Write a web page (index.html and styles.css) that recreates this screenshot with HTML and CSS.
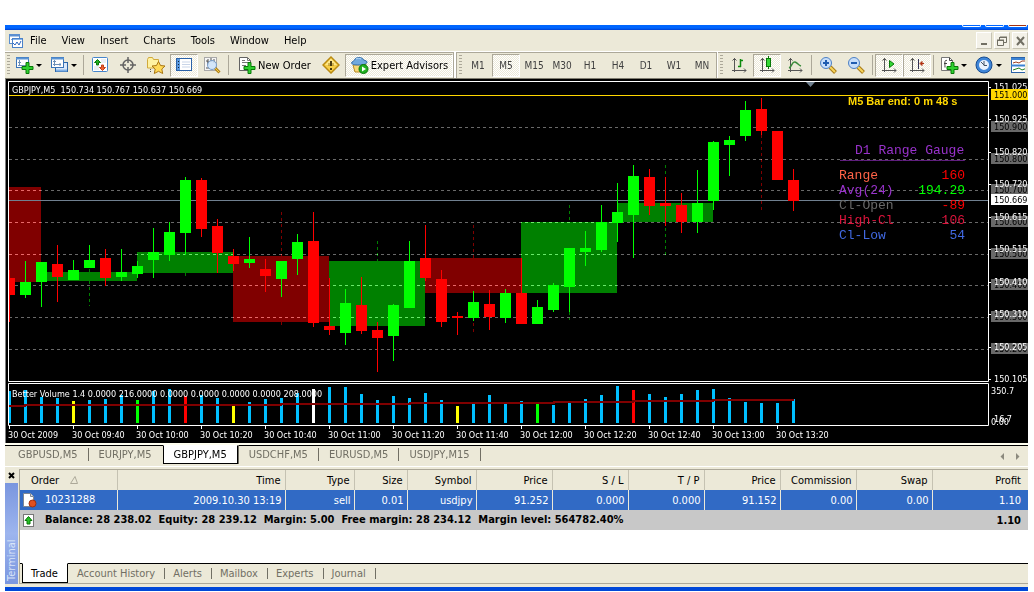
FILE: index.html
```html
<!DOCTYPE html>
<html lang="en">
<head>
<meta charset="utf-8">
<title>GBPJPY,M5</title>
<link rel="stylesheet" href="styles.css">
</head>
<body>
<div class="window">
  <div class="titlebar"><span class="cap"></span><span class="cap"></span><span class="cap cap-close"></span></div>

  <nav class="menubar">
    <svg class="menu-icon" width="16" height="16" viewBox="0 0 16 16"><rect x="1.500" y="1.500" width="10" height="9" fill="#fff" stroke="#5b8fd0"/><path d="M2 2.500h9" stroke="#5b8fd0" stroke-width="2"/><path d="M3 7l1-1 1 2 2-3 1 2" fill="none" stroke="#7aa5dc"/><rect x="4.500" y="5.500" width="10" height="9" fill="#fff" stroke="#4b82c8"/><path d="M5 6.500h9" stroke="#86b4ea" stroke-width="1"/><path d="M5 10l2 2 2-3 2 3 2-4" fill="none" stroke="#2b66c0"/></svg>
    <button class="menu">File</button><button class="menu">View</button><button class="menu">Insert</button><button class="menu">Charts</button><button class="menu">Tools</button><button class="menu">Window</button><button class="menu">Help</button>
    <span class="spring"></span>
    <button class="mdi" aria-label="Minimize"><svg width="14" height="14"><path d="M4 10h6" stroke="#716f64" stroke-width="2"/></svg></button>
    <button class="mdi" aria-label="Restore"><svg width="14" height="14"><path d="M5 3.500h7M4.500 3v3M11.500 3v5.500H9M2 6.500h7M2.500 6v5.500h6V6" fill="none" stroke="#716f64"/><path d="M5 3h7M2 6h7" stroke="#716f64"/></svg></button>
    <button class="mdi" aria-label="Close"><svg width="14" height="14"><path d="M4 3l7 8M11 3l-7 8" stroke="#716f64" stroke-width="2"/></svg></button>
  </nav>

  <div class="toolbar">
    <span class="grip"></span>
    <button class="tool wide" aria-label="New chart"><svg width="19" height="18"><rect x="1.500" y="1.500" width="12" height="10" fill="#fff" stroke="#3a74b8"/><path d="M1 2.500h13" stroke="#5b94d4" stroke-width="2"/><path d="M4.500 4v6M3 6.500h3M3 9.500h8" stroke="#6d90b8"/><path d="M11 6.500h3v4h4v3h-4v4h-3v-4H7v-3h4z" fill="#2fd02f" stroke="#087808"/></svg><i class="arrow"></i></button>
    <button class="tool wide" aria-label="Profiles"><svg width="19" height="18"><rect x="5.500" y="6.500" width="12" height="9" fill="#dbe9fa" stroke="#2c66a8"/><path d="M6 14.500h11" stroke="#7fb0e6" stroke-width="2"/><rect x="1.500" y="1.500" width="12" height="10" fill="#fff" stroke="#3a74b8"/><path d="M1 2.500h13" stroke="#5b94d4" stroke-width="2"/><path d="M4.500 4v6M3 5.500h3M3 8.500h8M10 7v3" stroke="#6d90b8"/></svg><i class="arrow"></i></button>
    <span class="sep"></span>
    <button class="tool" aria-label="Market watch"><svg width="18" height="18"><rect x="1.500" y="1.500" width="15" height="14" rx="1" fill="#fff" stroke="#4585cc"/><path d="M10 4h5M10 6h5M3 11h5M3 13h5" stroke="#d5dfe8"/><path d="M6.500 3.500l3 3H7.500V9h-2V6.500h-2z" fill="#20b020" stroke="#087808"/><path d="M11.500 14.500l-3-3h2V9h2v2.500h2z" fill="#f06030" stroke="#c04018"/></svg></button>
    <button class="tool" aria-label="Crosshair"><svg width="18" height="18"><circle cx="9" cy="9" r="5" fill="none" stroke="#636363" stroke-width="1.500"/><path d="M9 1v6M9 11v6M1 9h6M11 9h6" stroke="#636363" stroke-width="1.500"/></svg></button>
    <button class="tool" aria-label="Navigator"><svg width="20" height="18"><path d="M1.500 12V3.500l1-2h4l1 2h5V12z" fill="#fff2a2" stroke="#d0a93c"/><path d="M4.500 13v4" stroke="#555" stroke-dasharray="1 1"/><path d="M12.500 5.500l2 4 4.500.5-3.200 3 .9 4.500-4.200-2.200-4.200 2.200.9-4.500L6 10l4.500-.5z" fill="#ffda58" stroke="#a97612"/></svg></button>
    <button class="tool pressed" aria-label="Terminal"><svg width="18" height="18"><rect x="1.500" y="2.500" width="15" height="12" fill="#fff" stroke="#2b62a8"/><path d="M3.500 3v11" stroke="#5c9ae0" stroke-width="3"/><path d="M3 5.500h1M3 8.500h1M3 11.500h1" stroke="#123"/><path d="M7 6h8M7 8.500h8M7 11h8" stroke="#c9d5e8"/></svg></button>
    <button class="tool" aria-label="Strategy tester"><svg width="18" height="18"><rect x="1.500" y="1.500" width="12" height="13" fill="#f6f6f6" stroke="#a9a9a9"/><path d="M3 5h2v4M5 3v5M8 2v4M11 3v4M3 12h3" stroke="#555" fill="none"/><path d="M12 12l4.500 4.500" stroke="#b28218" stroke-width="3"/><path d="M12 12l4 4" stroke="#f3cc4c"/><circle cx="9" cy="9" r="4.500" fill="#cde3fa" fill-opacity=".85" stroke="#789cc8"/></svg></button>
    <span class="sep"></span>
    <button class="tool label-tool"><svg width="19" height="18"><path d="M2.500 1.500h8l3 3v10h-11z" fill="#fff" stroke="#636363"/><path d="M10.500 1.500v3h3M5 6.500h6M5 9.500h4M5 4.500h3" fill="none" stroke="#777"/><path d="M11 6.500h3v4h4v3h-4v4h-3v-4H7v-3h4z" fill="#2fd02f" stroke="#087808"/></svg>New Order</button>
    <button class="tool" aria-label="Metaeditor"><svg width="18" height="18"><path d="M9 1l8 8-8 8-8-8z" fill="#f7cf4a" stroke="#b98a12" stroke-width="1.500"/><path d="M9 2.500l6 6.500H3z" fill="#ffe88c"/><path d="M9 5v5M9 12v2" stroke="#4b3c10" stroke-width="2"/><path d="M7 7v3M11 7v3" stroke="#a07c16"/></svg></button>
    <button class="tool pressed label-tool experts"><svg width="19" height="18"><path d="M3 9l2 7h9l2-8z" fill="#f9d878" stroke="#ba8c22"/><path d="M1.500 7C2 5 5 5 5 3c1-2 7-2 8 0 0 2 4 1 4 3s-3 3-8 3-7-.5-7.500-2z" fill="#71a9de" stroke="#336ba5"/><path d="M6 3c1-1 4-1 5 0" stroke="#b8dafa" fill="none"/><circle cx="13.500" cy="13" r="4.500" fill="#22b022" stroke="#087808"/><path d="M12 10.500l4 2.500-4 2.500z" fill="#fff"/></svg>Expert Advisors</button>
    <span class="band-end"></span>
    <span class="grip"></span>
    <button class="tool period">M1</button><button class="tool period pressed">M5</button><button class="tool period">M15</button><button class="tool period">M30</button><button class="tool period">H1</button><button class="tool period">H4</button><button class="tool period">D1</button><button class="tool period">W1</button><button class="tool period">MN</button>
    <span class="band-end single"></span>
    <span class="grip"></span>
    <button class="tool" aria-label="Bar chart"><svg width="18" height="18"><path d="M4.500 2v14M2 14.500h14M2.500 4.500l2-2 2 2M14 12.500l2 2-2 2" fill="none" stroke="#555"/><path d="M10.500 3v8M10 4.500h3M8 10.500h3" stroke="#0c8a0c" stroke-width="1.500"/></svg></button>
    <button class="tool pressed" aria-label="Candlesticks"><svg width="18" height="18"><path d="M4.500 2v14M2 14.500h14M2.500 4.500l2-2 2 2M14 12.500l2 2-2 2" fill="none" stroke="#555"/><path d="M10.500 0v13" stroke="#087808"/><rect x="8.500" y="2.500" width="4" height="8" fill="#35d835" stroke="#087808"/></svg></button>
    <button class="tool" aria-label="Line chart"><svg width="18" height="18"><path d="M4.500 2v14M2 14.500h14M2.500 4.500l2-2 2 2M14 12.500l2 2-2 2" fill="none" stroke="#555"/><path d="M3 12c3-1 3-7 6-6s3 3 6 4" fill="none" stroke="#3c8c3c" stroke-width="1.500"/></svg></button>
    <span class="sep"></span>
    <button class="tool" aria-label="Zoom in"><svg width="18" height="18"><path d="M11 11l5.500 5.500" stroke="#a97c18" stroke-width="4"/><path d="M11 11l5 5" stroke="#f6d45c" stroke-width="2"/><circle cx="7" cy="7" r="5.500" fill="#c7defa" stroke="#4c80c4"/><path d="M4 7h6M7 4v6" stroke="#1f5cb0" stroke-width="2"/></svg></button>
    <button class="tool" aria-label="Zoom out"><svg width="18" height="18"><path d="M11 11l5.500 5.500" stroke="#a97c18" stroke-width="4"/><path d="M11 11l5 5" stroke="#f6d45c" stroke-width="2"/><circle cx="7" cy="7" r="5.500" fill="#c7defa" stroke="#4c80c4"/><path d="M4 7h6" stroke="#1f5cb0" stroke-width="2"/></svg></button>
    <span class="sep"></span>
    <button class="tool pressed" aria-label="Auto scroll"><svg width="18" height="18"><path d="M4.500 2v14M2 14.500h14M2.500 4.500l2-2 2 2M14 12.500l2 2-2 2" fill="none" stroke="#555"/><path d="M9.500 4.500v7L14 8z" fill="#35d835" stroke="#087808"/></svg></button>
    <button class="tool pressed" aria-label="Chart shift"><svg width="18" height="18"><path d="M4.500 2v14M2 14.500h14M2.500 4.500l2-2 2 2M14 12.500l2 2-2 2" fill="none" stroke="#555"/><path d="M10.500 3v10" stroke="#335"/><path d="M16 7.500h-3M14 5.500l-2 2 2 2z" fill="#b03010" stroke="#b03010"/></svg></button>
    <span class="sep"></span>
    <button class="tool wide" aria-label="Indicators"><svg width="19" height="18"><path d="M1.500 1.500h8l3 3v10h-11z" fill="#fff" stroke="#777"/><path d="M9.500 1.500v3h3M7 4.500c-3-1-2 3-2 7M4 7.500h3" fill="none" stroke="#444"/><path d="M11 6.500h3v4h4v3h-4v4h-3v-4H7v-3h4z" fill="#2fd02f" stroke="#087808"/></svg><i class="arrow"></i></button>
    <button class="tool wide" aria-label="Periodicity"><svg width="19" height="18"><circle cx="9" cy="9" r="6.500" fill="#e9f3fd" stroke="#3f86d8" stroke-width="3"/><circle cx="9" cy="9" r="8" fill="none" stroke="#184c90"/><path d="M9 5v4.500h3M6 6l3 3" fill="none" stroke="#456"/></svg><i class="arrow"></i></button>
    <button class="tool last" aria-label="Templates"><svg width="15" height="18"><rect x="1.500" y="1.500" width="18" height="15" fill="#fff" stroke="#2b62a8"/><path d="M1 3h18M1 9.500h18" stroke="#3c83d4" stroke-width="2"/><path d="M3 7l3-1 3 1 3-2h5" fill="none" stroke="#a04020"/><path d="M3 14l3-1 3-1 3 2 5-2" fill="none" stroke="#208020"/></svg></button>
  </div>

  <svg class="chart" id="chart" viewBox="5 79 1023 364" role="img" aria-label="GBPJPY five minute chart">
    <rect x="5" y="79" width="1023" height="364" fill="#000"/>
    <rect x="5" y="79" width="1" height="364" fill="#808080"/>
    <g id="zones"></g>
    <g id="grid"></g>
    <g id="candles"></g>
    <path d="M9 95.500H988" stroke="#ffd700"/>
    <path d="M806 82h9l-4.500 5z" fill="#708090"/>
    <g id="volume"></g>
    <path d="M9 406H25V405H281V404H410V403H554V402H633V401H713V400H794" fill="none" stroke="#800000" stroke-width="2"/>
    <path d="M8.500 381.500V81.500H988.500V381.500zM8.500 383.500H988.500V425.500H8.500z" fill="none" stroke="#fff"/>
    <g id="axes"></g>
    <text class="chart-text" x="12" y="93">GBPJPY,M5&#160; 150.734 150.767 150.637 150.669</text>
    <text class="chart-text" x="12" y="397">Better Volume 1.4 0.0000 216.0000 0.0000 0.0000 0.0000 0.0000 208.0000</text>
    <text class="bar-end" x="848" y="105">M5 Bar end: 0 m 48 s</text>
    <g class="gauge">
      <text x="855" y="154" fill="#9932cc">D1 Range Gauge</text>
      <text x="840" y="159" fill="#9932cc">________________</text>
      <text x="839" y="179" fill="#ff6347">Range</text><text class="end" x="965" y="179" fill="#ff0000">160</text>
      <text x="839" y="194" fill="#9932cc">Avg(24)</text><text class="end" x="965" y="194" fill="#00ff00">194.29</text>
      <text x="839" y="209" fill="#696969">Cl-Open</text><text class="end" x="965" y="209" fill="#ff0000">-89</text>
      <text x="839" y="224" fill="#dc143c">High-Cl</text><text class="end" x="965" y="224" fill="#dc143c">106</text>
      <text x="839" y="239" fill="#4169e1">Cl-Low</text><text class="end" x="965" y="239" fill="#4169e1">54</text>
    </g>
  </svg>

  <div class="chart-tabs">
    <button class="ctab">GBPUSD,M5</button><button class="ctab plain">EURJPY,M5</button><button class="ctab active">GBPJPY,M5</button><button class="ctab">USDCHF,M5</button><button class="ctab">EURUSD,M5</button><button class="ctab">USDJPY,M15</button>
    <span class="spring"></span>
    <svg width="26" height="10"><path d="M6 2v7L2.500 5.500zM18 2v7l3.500-3.500z" fill="#8c8a7e"/></svg>
  </div>

  <section class="terminal">
    <div class="side">
      <button class="close" aria-label="Close terminal"><svg width="8" height="8"><path d="M1 1l5 5M6 1L1 6" stroke="#000" stroke-width="2"/></svg></button>
      <div class="side-title">Terminal</div>
    </div>
    <div class="panel">
      <table class="orders">
        <colgroup><col class="c-order"><col class="c-time"><col class="c-type"><col class="c-size"><col class="c-type"><col class="c-num"><col class="c-num"><col class="c-num"><col class="c-num"><col class="c-num"><col class="c-num"><col></colgroup>
        <thead><tr><th class="first">Order <svg class="sort" width="9" height="8"><path d="M.500 7.500h7L5 .500z" fill="none" stroke="#aca899"/></svg></th><th>Time</th><th>Type</th><th>Size</th><th>Symbol</th><th>Price</th><th>S / L</th><th>T / P</th><th>Price</th><th>Commission</th><th>Swap</th><th>Profit</th></tr></thead>
        <tbody>
          <tr class="order"><td class="first"><svg width="15" height="16"><path d="M1.500 1.500h7l3 3v10h-10z" fill="#fff" stroke="#7d8794"/><path d="M8.500 1.500v3h3" fill="#ddd" stroke="#7d8794"/><circle cx="10.500" cy="11.500" r="3.500" fill="#e05020" stroke="#a03010"/></svg>10231288</td><td>2009.10.30 13:19</td><td>sell</td><td>0.01</td><td>usdjpy</td><td>91.252</td><td>0.000</td><td>0.000</td><td>91.152</td><td>0.00</td><td>0.00</td><td>1.10</td></tr>
          <tr class="balance"><td class="first" colspan="11"><svg width="15" height="16"><rect x="1.500" y="2.500" width="10" height="12" fill="#fff" stroke="#777"/><path d="M6.500 4.500L10 8.500H8V12H5V8.500H3z" fill="#28c028" stroke="#087808"/></svg>Balance: 28 238.02&#160; Equity: 28 239.12&#160; Margin: 5.00&#160; Free margin: 28 234.12&#160; Margin level: 564782.40%</td><td>1.10</td></tr>
        </tbody>
      </table>
      <div class="blank"></div>
      <div class="term-tabs"><button class="ttab active">Trade</button><button class="ttab">Account History</button><button class="ttab">Alerts</button><button class="ttab">Mailbox</button><button class="ttab">Experts</button><button class="ttab">Journal</button></div>
    </div>
  </section>
  <div class="bottom-edge"></div>
</div>
<script src="chart.js"></script>
</body>
</html>
```
FILE: styles.css
```css
* { box-sizing: border-box; }
body { margin: 0; background: #fff; }
body, button, table { font-family: "DejaVu Sans Condensed", "DejaVu Sans", sans-serif; font-size: 11px; color: #000; }
button { margin: 0; padding: 0; border: 0; background: none; white-space: nowrap; }
svg { flex: none; display: block; }
.window { margin: 25px 6px 0 5px; background: #ece9d8; }
.spring { flex: 1; }

.titlebar { display: flex; justify-content: flex-end; gap: 4px; height: 5px; padding-right: 1px; background: linear-gradient(#0066ff 0 60%, #0040d0); }
.cap { width: 19px; height: 2px; border: 1px solid #fff; border-top: 0; border-radius: 0 0 3px 3px; }
.cap-close { background: #a03010; }

.menubar { display: flex; align-items: center; height: 21px; padding-left: 3px; }
.menu-icon { margin-right: 6px; }
.menu { margin-right: 15px; line-height: 18px; }
.mdi { width: 16px; height: 17px; margin-left: 2px; border: 1px solid; border-color: #fff #c5c2b2 #c5c2b2 #fff; background: #f3f1e8; }

.toolbar { display: flex; align-items: center; height: 28px; border-top: 1px solid #fff; border-bottom: 1px solid #807d70; box-shadow: inset 0 1px #aca899; overflow: hidden; }
.grip { flex: none; width: 3px; height: 20px; margin: 0 2px; background: repeating-linear-gradient(#aca899 0 1px, #ece9d8 1px 3px); }
.toolbar > .grip:first-child { margin-right: 1px; }
.sep { flex: none; width: 1px; height: 20px; margin: 0 2px; background: #aca899; }
.band-end { flex: none; width: 4px; height: 26px; border: 1px solid #aca899; border-width: 0 1px; background: #fff; }
.band-end.single { width: 2px; border-right: 0; }
.tool { flex: none; display: flex; align-items: center; justify-content: center; width: 28px; height: 23px; border: 1px solid transparent; }
.tool.wide { width: 35px; gap: 2px; }
.tool.label-tool { width: 86px; gap: 2px; }
.tool.experts { width: 108px; }
.tool.last { width: 20px; justify-content: flex-end; }
.period { font-size: 10px; color: #404040; }
.tool.pressed { border-color: #aca899 #fff #fff #aca899; background: repeating-conic-gradient(#fff 0 25%, #ece9d8 0 50%) 0 0 / 2px 2px; }
.arrow { border: 3px solid transparent; border-top-color: #000; border-bottom: 0; }

.chart { width: 100%; height: auto; }
.chart-text { font-family: "DejaVu Sans Condensed", "DejaVu Sans", sans-serif; font-size: 9px; fill: #fff; }
.chart-text.dark { fill: #000; }
.bar-end { font-family: "Liberation Sans Narrow", "Liberation Sans", sans-serif; font-weight: bold; font-size: 11px; fill: #ffd700; }
.gauge { font-family: "Liberation Mono", monospace; font-size: 13px; }
.end { text-anchor: end; }
.gridline { mix-blend-mode: plus-lighter; }

.chart-tabs { display: flex; align-items: stretch; height: 24px; padding: 0 4px 1px 2px; border-top: 2px solid #fffff0; box-shadow: inset 0 1px #000, inset 0 -1px #fff; }
.chart-tabs svg { align-self: center; }
.ctab { display: flex; align-items: center; height: 19px; color: #716f64; padding: 0 9px 0 11px; }
.ctab::after { content: ""; width: 1px; height: 13px; margin-left: 10px; margin-right: -10px; background: #716f64; }
.ctab.plain { padding-right: 11px; }
.ctab.plain::after, .ctab.active::after { content: none; }
.ctab.active { padding: 0 10px; border: 1px solid #000; border-top-color: #fff; background: #fff; color: #000; box-shadow: 1px 0 #716f64; }

.terminal { display: flex; border-top: 2px solid #ece9d8; }
.side { display: flex; flex-direction: column; width: 14px; }
.close { display: flex; align-items: center; justify-content: center; height: 14px; width: 13px; }
.side-title { flex: 1; width: 13px; padding-top: 3px; line-height: 13px; writing-mode: vertical-rl; transform: rotate(180deg); text-align: left; color: #d8e4f8; background: linear-gradient(#7a96df, #9db5ee, #7a96df); }
.panel { flex: 1; min-width: 0; border: 1px solid #aca899; border-width: 1px 0 1px 1px; background: #fff; }
.orders { width: 100%; table-layout: fixed; border-collapse: collapse; }
.c-order { width: 97px; }
.c-time { width: 168px; }
.c-type { width: 69px; }
.c-size { width: 53px; }
.c-num { width: 76px; }
th, td { height: 20px; padding: 0 3px 0 0; text-align: right; font-weight: normal; white-space: nowrap; border-right: 1px solid #ece9d8; }
th { padding-right: 4px; background: #ece9d8; border-right-color: #c5c2b2; }
th:last-child, td:last-child { border-right: 0; padding-right: 7px; }
.first { text-align: left; }
th.first { padding-left: 11px; }
.sort { display: inline-block; margin-left: 8px; }
td.first svg { display: inline-block; vertical-align: middle; margin: 0 8px 0 2px; }
.order { background: #316ac5; }
.order td { color: #fff; }
.balance { background: #c8c8c8; }
.balance td { font-weight: bold; border-right: 0; }
.blank { height: 33px; }
.term-tabs { display: flex; height: 20px; background: #ece9d8; border-top: 1px solid #000; }
.ttab { display: flex; align-items: center; color: #716f64; padding-left: 8px; height: 18px; }
.ttab::after { content: ""; width: 1px; height: 11px; margin-left: 9px; background: #716f64; }
.ttab.active { margin: -1px 1px 0 2px; height: 20px; padding: 0 9px 0 8px; background: #fff; color: #000; border: 1px solid #000; border-top-color: #fff; }
.ttab.active::after { content: none; }
.bottom-edge { height: 7px; border-bottom: 4px solid #0048d8; background: #ece9d8; }
```
FILE: chart.js
```js
const NS = "http://www.w3.org/2000/svg";

function add(parent, name, attrs, text) {
  const el = document.createElementNS(NS, name);
  for (const key in attrs) el.setAttribute(key, attrs[key]);
  if (text) el.textContent = text;
  document.getElementById(parent).appendChild(el);
}

function box(parent, x, top, width, bottom, fill) {
  add(parent, "rect", { x, y: top, width, height: bottom - top, fill });
}

const UP = "#00ff00", DOWN = "#ff0000", UP_DARK = "#008000", DOWN_DARK = "#800000";
const barX = i => 9 + 16 * i;

// [left, right, top, bottom, colour]
[[9, 41, 187, 282, DOWN_DARK], [41, 137, 272, 281, UP_DARK], [137, 233, 252, 273, UP_DARK],
 [233, 329, 256, 322, DOWN_DARK], [329, 425, 261, 326, UP_DARK], [425, 521, 258, 293, DOWN_DARK],
 [521, 617, 222, 293, UP_DARK], [617, 713, 203, 222, UP_DARK]
].forEach(([l, r, t, b, c]) => box("zones", l, t, r - l, b, c));

// Half-hour wicks: [bar, top, bottom, colour]
[[5, 269, 306, UP_DARK], [11, 273, 276, UP_DARK], [17, 212, 256, DOWN_DARK], [17, 322, 325, DOWN_DARK],
 [23, 241, 261, UP_DARK], [29, 225, 258, DOWN_DARK], [29, 323, 332, DOWN_DARK], [35, 205, 221, UP_DARK],
 [35, 312, 320, UP_DARK], [41, 165, 177, UP_DARK], [41, 228, 255, UP_DARK], [47, 135, 210, DOWN_DARK]
].forEach(([i, t, b, c]) => add("zones", "path",
  { d: `M${barX(i) + 0.5} ${t}V${b}`, stroke: c, "stroke-dasharray": "3 3" }));

const levels = [[127, "150.900"], [159, "150.800"], [190, "150.700"], [222, "150.600"],
  [254, "150.500"], [285, "150.400"], [317, "150.300"], [349, "150.200"]];
levels.forEach(([y]) => add("grid", "path",
  { class: "gridline", d: `M9 ${y + 0.5}H988`, stroke: "#696969", "stroke-dasharray": "3 3" }));
add("grid", "path", { d: "M9 200.5H988", stroke: "#708090" });

// [direction, body top, body bottom, wick top, wick bottom]
[[0,278,295,270,322],[1,282,295,261,298],[1,262,282,262,307],[0,264,277,245,302],[1,270,280,260,280],
 [1,260,268,245,268],[0,258,278,249,286],[1,272,277,249,281],[1,266,274,261,278],[1,252,260,228,278],
 [1,232,255,222,261],[1,180,233,177,255],[0,180,229,178,237],[0,226,253,219,273],[0,256,264,249,271],
 [1,259,263,237,268],[0,269,276,259,292],[1,261,279,261,297],[1,242,259,234,275],[0,241,323,212,327],
 [0,326,330,278,335],[1,303,333,289,345],[0,305,331,277,334],[0,330,338,322,372],[1,305,336,304,361],
 [1,261,308,241,308],[0,258,278,225,281],[0,279,322,270,327],[0,316,318,312,335],[1,302,318,291,321],
 [0,304,317,290,330],[1,293,318,289,323],[0,293,324,258,324],[1,307,324,300,324],[1,285,310,283,312],
 [1,248,287,248,312],[1,248,252,231,266],[1,222,250,205,252],[1,212,223,183,242],[1,176,215,165,258],
 [0,177,206,169,215],[0,203,206,177,226],[0,205,222,193,233],[1,203,222,170,233],[1,142,201,141,210],
 [1,140,145,136,176],[1,110,136,101,141],[0,109,131,98,135],[0,131,180,131,180],[0,180,201,169,211]
].forEach(([up, top, bottom, high, low], i) => {
  const x = barX(i), left = Math.max(x - 5, 9), fill = up ? UP : DOWN;
  box("candles", x, high, 1, low, fill);
  box("candles", left, top, x + 6 - left, bottom, fill);
});

const volumeColors = { 4: "#ffff00", 8: UP, 11: DOWN, 14: "#ffff00", 19: "#ffffff", 28: "#ffff00", 33: UP, 39: DOWN };
[391,390,397,398,401,400,399,395,400,391,389,396,395,398,406,402,399,398,393,389,387,387,394,400,396,
 398,393,400,406,404,395,404,401,404,405,403,399,395,386,390,394,397,394,390,389,398,402,403,403,399
].forEach((top, i) => box("volume", barX(i) - 1, top, 3, 423, volumeColors[i] || "#00bfff"));

function label(x, y, text, dark) {
  add("axes", "text", { class: dark ? "chart-text dark" : "chart-text", x, y }, text);
}

levels.forEach(([y, text]) => { box("axes", 991, y - 6, 37, y + 5, "#696969"); label(994, y + 3, text, true); });
[[87, "151.025"], [119, "150.925"], [152, "150.820"], [184, "150.720"], [217, "150.615"], [249, "150.515"],
 [282, "150.410"], [314, "150.310"], [347, "150.205"], [379, "150.105"]
].forEach(([y, text]) => { box("axes", 988, y, 3, y + 1, "#fff"); label(994, y + 3, text); });
box("axes", 991, 89, 37, 100, "#ffd700"); label(994, 98, "151.000", true);
box("axes", 991, 194, 37, 205, "#fff"); label(994, 203, "150.669", true);
label(991, 394, "350.7"); label(991, 425, "0.00"); label(994, 422, "16.7");

["2009", "09:40", "10:00", "10:20", "10:40", "11:00", "11:20", "11:40", "12:00", "12:20", "12:40", "13:00", "13:20"]
  .forEach((time, k) => { box("axes", 9 + 64 * k, 426, 1, 429, "#fff"); label(8 + 64 * k, 438, "30 Oct " + time); });
```
